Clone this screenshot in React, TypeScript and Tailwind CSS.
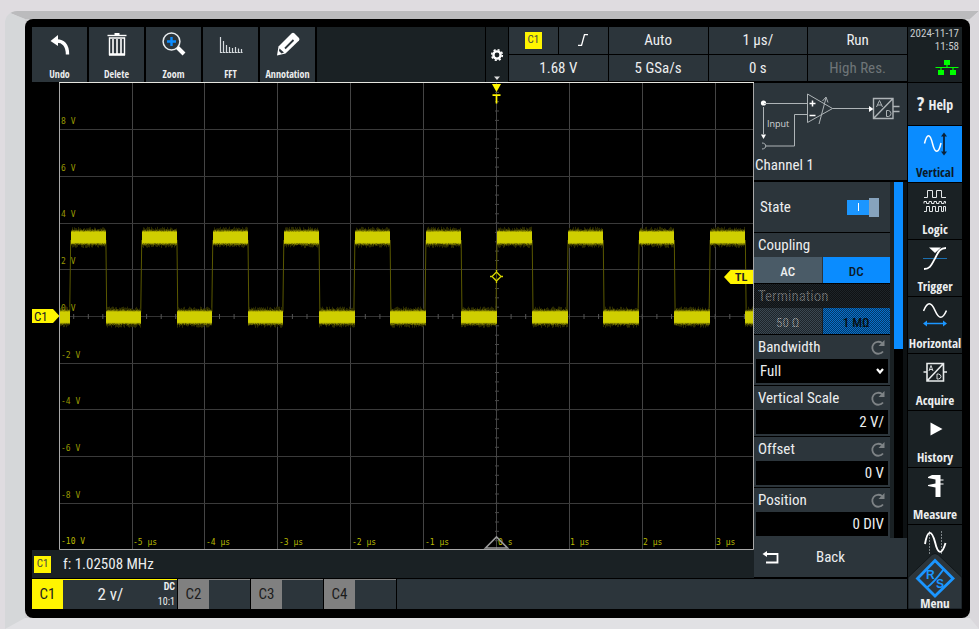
import {useId, useState} from "react";
import clsx from "clsx";

const PLOT = {left: 59, right: 753, top: 82, bottom: 549};
const CENTER = {x: 496, y: 316};
const DIV_X = 72.9;
const DIV_Y = 46.7;
const PERIOD = 71.05;

const VERTICALS = Array.from({length: 9}, (_, i) => CENTER.x + (i - 5) * DIV_X);
const HORIZONTALS = Array.from({length: 9}, (_, i) => CENTER.y + (i - 4) * DIV_Y);

// small repeatable generator, keeps the trace stable between renders
const createRandom = (seed: number) => () => {
	seed = (seed * 16807) % 2147483647;
	return seed / 2147483647;
};

const buildNoise = (
	from: number,
	to: number,
	y: number,
	half: number,
	spread: number,
	seed: number,
) => {
	const random = createRandom(seed);
	let d = "";

	for (let x = from; x < to; x += 1) {
		const up = half + random() * spread;
		const down = half + random() * spread;
		d += `M${x + 0.5} ${(y - up).toFixed(1)}V${(y + down).toFixed(1)}`;
	}

	return d;
};

const SEGMENTS = Array.from({length: 11}, (_, i) => {
	const rise = 497 + (i - 6) * PERIOD;
	const fall = rise + 35.3;

	return [
		{from: rise, to: fall, y: 237.4},
		{from: fall, to: rise + PERIOD - 0.4, y: 317.2},
	];
})
	.flat()
	.concat([{from: 59, to: 70.3, y: 317.2}])
	.map((s) => ({...s, from: Math.round(s.from), to: Math.min(Math.round(s.to), PLOT.right)}))
	.filter((s) => s.from < s.to);

const Waveform: React.FC = () => (
	<g fill="none">
		{Array.from({length: 10}, (_, i) => {
			const rise = 497 + (i - 6) * PERIOD;

			return (
				<path
					key={i}
					d={`M${rise - 1} 312L${rise} 240M${rise + 35.2} 240L${rise + 36} 312`}
					stroke="#5a5800"
				/>
			);
		})}

		{SEGMENTS.map((s, i) => (
			<g key={i}>
				<path d={buildNoise(s.from, s.to, s.y, 7.5, 3.2, i * 131 + 17)} stroke="#2c2b00" />
				<path d={buildNoise(s.from, s.to, s.y, 6.6, 1.4, i * 77 + 33)} stroke="#6b6a00" />
				<path d={buildNoise(s.from, s.to, s.y, 5.8, 0.8, i * 57 + 91)} stroke="#aead00" />
				<rect x={s.from} y={s.y - 5.5} width={s.to - s.from} height="11" fill="#cfce00" />
			</g>
		))}
	</g>
);

const Plot: React.FC = () => (
	<svg
		viewBox="32 82 722 468"
		className="block w-full h-full bg-black"
		role="img"
		aria-label="Channel 1"
	>
		<g stroke="#444" fill="none">
			{VERTICALS.map((x) => (
				<path key={x} d={`M${Math.round(x) + 0.5} 83V549`} />
			))}
			{HORIZONTALS.map((y) => (
				<path
					key={y}
					d={`M60 ${Math.round(y) + 0.5}H753`}
					stroke={y === CENTER.y ? "#333" : "#3a3a3a"}
				/>
			))}

			{Array.from({length: 47}, (_, i) => CENTER.x + 0.5 + (i - 29) * 14.58).map((x) => (
				<path key={x} d={`M${x.toFixed(1)} 314V319`} stroke="#555" />
			))}
			{Array.from({length: 49}, (_, i) => CENTER.y + 0.5 + (i - 24) * 9.34).map((y) => (
				<path key={y} d={`M495 ${y.toFixed(1)}H499`} stroke="#484848" />
			))}
		</g>

		<Waveform />

		<g fill="#989800" fontSize="8" fontWeight="400" fontFamily="'DejaVu Sans Mono', monospace">
			{["8 V", "6 V", "4 V", "2 V", "0 V", "-2 V", "-4 V", "-6 V", "-8 V"].map(
				(label, i) => (
					<text key={label} x="61" y={124 + Math.round(i * DIV_Y)}>
						{label}
					</text>
				),
			)}
			<text x="61" y="544" fill="#b8b800">
				-10 V
			</text>
			<g fill="#b8b800">
				{["-5 µs", "-4 µs", "-3 µs", "-2 µs", "-1 µs", "0 s", "1 µs", "2 µs", "3 µs"].map(
					(label, i) => (
						<text key={label} x={133 + Math.round(i * DIV_X)} y="545">
							{label}
						</text>
					),
				)}
			</g>
		</g>

		<path
			d={`M${PLOT.left + 0.5} ${PLOT.top + 0.5}H${PLOT.right + 0.5}V${PLOT.bottom + 0.5}H${PLOT.left + 0.5}Z`}
			fill="none"
			stroke="#a8a8a8"
		/>
		<path d="M59 82.5H754" stroke="#e6e6e0" />

		<path d="M485.5 548L496.5 537L507.5 548Z" fill="none" stroke="#999" strokeWidth="1.6" />
		<path d="M492 84H501L496.5 92Z" fill="#fff500" />
		<path d="M492.5 95.2H500.5M496.5 95V103.5" stroke="#fff500" strokeWidth="1.7" />
		<path
			d="M496.5 272L501 276.5L496.5 281L492 276.5ZM496.5 272V270M496.5 281V283M501 276.5H503M492 276.5H490"
			fill="none"
			stroke="#d5d400"
			strokeWidth="1.3"
		/>

		<path d="M31 309H53L59.5 316L53 323H31Z" fill="#fff500" />
		<text x="34" y="321" fontSize="13" fill="#222">
			C1
		</text>
		<path d="M753 270H730.5L724 277L730.5 284H753Z" fill="#fff500" />
		<text x="735" y="281" fontSize="11" fontFamily="'Open Sans', sans-serif" fontWeight="700" fill="#222">
			TL
		</text>
	</svg>
);

const UndoIcon = () => (
	<svg viewBox="0 0 24 24" className="size-6" fill="none">
		<path d="M2.5 9L10 3v11Z" fill="#fff" />
		<path d="M8 9C15 8.5 19.5 13 19.5 22.500" stroke="#fff" strokeWidth="3.4" />
	</svg>
);

const TrashIcon = () => (
	<svg viewBox="0 0 24 24" className="size-6" fill="none" stroke="#fff">
		<path d="M2.5 3.5H21.500" strokeWidth="1.4" />
		<path d="M9.5 2H14.500" strokeWidth="2" />
		<path d="M4.5 6V22.500H19.500V6Z" strokeWidth="1.4" />
		<path d="M4 22.500H20" strokeWidth="2.400" />
		<path d="M8 7V22M12 7V22M16 7V22" strokeWidth="1.6" />
	</svg>
);

const ZoomIcon = () => (
	<svg viewBox="0 0 24 24" className="size-6" fill="none">
		<circle cx="9.5" cy="9.5" r="8.400" stroke="#e8ecee" strokeWidth="1.5" />
		<path d="M9.5 5V14M5 9.5H14" stroke="#0a8cff" strokeWidth="2.4" />
		<path d="M15.500 15.500L22 22" stroke="#fff" strokeWidth="4" />
	</svg>
);

const FftIcon = () => (
	<svg viewBox="0 0 24 24" className="size-6" fill="none" stroke="#d5dadd">
		<path d="M1.5 20.500H23.500" strokeDasharray="2 1" />
		<path
			d="M1.5 5V21M4.500 9V21M7.500 13V21M10.500 15V21M13.500 16V21M16.500 15V21M19.500 16.500V21M22.500 17V21"
			strokeWidth="1.2"
		/>
	</svg>
);

const PencilIcon = () => (
	<svg viewBox="0 0 24 24" className="size-6" fill="none">
		<path d="M1 23.500L2.500 14.500L15.500 1.500Q17 0 18.500 1.500L23 6Q24 7 23 8.500L9.500 21.500Z" fill="#fff" />
		<path d="M9 16.500L17.500 8" stroke="#2c353b" strokeWidth="1.8" />
		<path d="M3.500 16.500L8 20.500L5.500 21.500L3 19Z" fill="#2c353b" />
	</svg>
);

const GearIcon = () => (
	<svg viewBox="0 0 14 14" className="size-[14px]" fill="none" stroke="#fff">
		<circle cx="7" cy="7" r="3.6" strokeWidth="2.4" />
		<circle cx="7" cy="7" r="5.3" strokeWidth="1.6" strokeDasharray="2.1 2.06" />
	</svg>
);

const NetworkIcon = () => (
	<svg viewBox="0 0 24 16" className="block w-6 h-4" fill="#00ff00">
		<path d="M9 0H15V5H9ZM3 10H9V15H3ZM15 10H21V15H15Z" />
		<path d="M0.500 7.500H23.500M12 5V8M6 7.500V11M18 7.500V11" stroke="#00ff00" strokeWidth="1.2" />
	</svg>
);

const VerticalIcon = () => (
	<svg viewBox="0 0 24 24" className="size-6" fill="none">
		<path d="M1.500 11.500C4 1 7 1 9.500 11.500C12 22 15.500 22 18 11" stroke="#fff" strokeWidth="1.5" />
		<path d="M21 3V21" stroke="#0b2238" strokeWidth="1.8" />
		<path d="M18 4.500L21 0.500L24 4.500ZM18 19.500L21 23.500L24 19.500Z" fill="#0b2238" />
	</svg>
);

const LogicIcon = () => (
	<svg viewBox="0 0 24 24" className="size-6" fill="none" stroke="#e3e6e8">
		<path d="M1 8.500H4.500V1.500H9.500V8.500H13.500V1.500H18.500V8.500H23" />
		<path d="M1 14.500V12.500H3.500V14.500H6V12.500H8.500V14.500H11V12.500H13.500V14.500H16V12.500H18.500V14.500H21V12.500H22.500V14.500" />
		<path d="M1 22.500H3.500V17.500H6.500V22.500H9.500V17.500H12.500V22.500H15.500V17.500H18.500V22.500H20.500V17.500H22.500V22.500" />
	</svg>
);

const TriggerIcon = () => (
	<svg viewBox="0 0 24 24" className="size-6" fill="none">
		<path d="M0 12.500H24" stroke="#1b6fb0" />
		<path d="M1 23C8 23 9 17 12 12.500C15 7 16 2 23 2" stroke="#fff" strokeWidth="1.8" />
		<path d="M6 1.500H18L12 7Z" fill="#fff" />
	</svg>
);

const HorizontalIcon = () => (
	<svg viewBox="0 0 24 24" className="size-6" fill="none">
		<path d="M0.500 8C4.500 -1.500 8 -1.500 12 7.500C16 16.500 19.500 16.500 23.500 7.500" stroke="#fff" strokeWidth="1.6" />
		<path d="M2 20.500H22" stroke="#1b96ff" strokeWidth="1.5" />
		<path d="M4 17.500L0 20.500L4 23.500ZM20 17.500L24 20.500L20 23.500Z" fill="#1b96ff" />
	</svg>
);

const AcquireIcon = () => (
	<svg viewBox="0 0 24 24" className="size-6" fill="none" stroke="#e8ebec" strokeWidth="1.6">
		<path d="M4 3.500H20.500V21H4ZM20 4L4.500 20.500M0.500 12H4M20.500 12H24" />
		<path d="M6 11L8 5.500L10 11M6.500 9.500H9.500M14 14V19H15.500Q18 18.500 18 16.500Q18 14.500 15.500 14Z" strokeWidth="0.9" />
	</svg>
);

const HistoryIcon = () => (
	<svg viewBox="0 0 24 24" className="size-6" fill="#fff">
		<path d="M7.500 5.500L19.500 12L7.500 18.500Z" />
	</svg>
);

const MeasureIcon = () => (
	<svg viewBox="0 0 24 24" className="size-6" fill="#fff">
		<path d="M9 1H17.500V23H12.500V13.500L5 12V11L12.500 9.500V5.500L5 4V3Z" />
		<path d="M17 5.500H20.500V6.500H17ZM17 9.500H20.500V10.500H17Z" />
	</svg>
);

const CursorIcon = () => (
	<svg viewBox="0 0 24 24" className="size-6" fill="none">
		<path d="M6.500 0V24M18.500 0V24" stroke="#7d8487" strokeDasharray="2 1" />
		<path d="M2 13C4.500 -1.500 8.500 -1.500 12 11C15 24 19 24 22.500 12" stroke="#fff" strokeWidth="1.9" />
	</svg>
);

const ResetIcon = () => (
	<svg viewBox="0 0 16 16" className="size-4" fill="none">
		<path d="M12 4A6 6 0 1 0 13 12.500" stroke="#7e8386" strokeWidth="1.8" />
		<path d="M14.500 1V7H8.500Z" fill="#7e8386" />
	</svg>
);

const InputDiagram: React.FC = () => (
	<svg viewBox="0 0 153 72" className="block w-full" fill="none" stroke="#aeb4b7">
		<circle cx="9.5" cy="20" r="2.6" fill="#fff" stroke="none" />
		<path d="M10 20.500H53.500M9.500 24V51" />
		<path d="M7 51.500H12L9.500 56Z" fill="#fff" stroke="none" />
		<path d="M8 60C13 60 13 66 8 66M12 63H40.500V31.500H53.500" />
		<path d="M53.500 11V39.500L78.500 25.500ZM78.500 25.500H116" />
		<path d="M65 41L72 15M68.500 18L72 14L74 19.500" />
		<path d="M55.500 20.500H61.500M58.500 17.500V23.500M55.500 32.500H61.500" stroke="#fff" strokeWidth="1.5" />
		<path d="M115 23L119.500 26L115 29Z" fill="#fff" stroke="none" />
		<path d="M119.500 15.500H139V35.500H119.500ZM138.500 16L120 35M139 23.500H145.500M139 28.500H145.500" strokeWidth="1.4" />
		<path d="M122.500 24L125.500 17.500L128.500 24M123.500 22H127.500M132.500 27.500V33.500H134.500Q137 33 137 30.500Q137 28 134.500 27.500Z" />
		<text
			x="13"
			y="44"
			fontSize="9"
			fontFamily="'Open Sans', sans-serif"
			fill="#d3d6d8"
			stroke="none"
		>
			Input
		</text>
	</svg>
);

const TOOLS = [
	{label: "Undo", icon: <UndoIcon />},
	{label: "Delete", icon: <TrashIcon />},
	{label: "Zoom", icon: <ZoomIcon />},
	{label: "FFT", icon: <FftIcon />},
	{label: "Annotation", icon: <PencilIcon />},
];

const Toolbar: React.FC = () => (
	<header className="flex h-[55px] gap-px">
		<div className="flex gap-px font-['Open_Sans_Condensed',sans-serif] font-bold">
			{TOOLS.map(({label, icon}) => (
				<button
					key={label}
					className="flex flex-col items-center justify-between w-14 pt-[5px] border-r border-black bg-[#2c353b] text-[10px] leading-4 text-[#eceeef]"
				>
					{icon}
					<span>{label}</span>
				</button>
			))}
		</div>

		<div className="flex-1 bg-[#1a2124]" />

		<button
			aria-label="Settings"
			className="flex flex-col items-center justify-end gap-3.5 w-[22px] pb-[2px] bg-[#1a2124]"
		>
			<GearIcon />
			<svg viewBox="0 0 6 4" className="w-[6px] h-1">
				<path d="M0 0.500H6L3 4Z" fill="#ddd" />
			</svg>
		</button>

		<div className="grid grid-cols-4 grid-rows-2 gap-px w-[398px] pb-px text-[15px] leading-5 text-[#eceeef] *:flex *:items-center *:justify-center *:bg-[#2c353b]">
			<div className="gap-px !bg-black">
				<span className="flex flex-1 h-full items-center justify-center bg-[#2c353b]">
					<span className="flex items-center justify-center size-[17px] bg-[#fff500] text-[11px] text-[#444]">
						C1
					</span>
				</span>
				<span className="flex flex-1 h-full items-center justify-center bg-[#2c353b]">
					<svg viewBox="0 0 12 12" className="size-3" fill="none" stroke="#fff">
						<path d="M1 11.500H4.500L7.500 0.500H11" strokeWidth="1.3" />
					</svg>
				</span>
			</div>
			<div>Auto</div>
			<div>1 µs/</div>
			<div>Run</div>
			<div>1.68 V</div>
			<div>5 GSa/s</div>
			<div>0 s</div>
			<div className="text-[#6f7578]">High Res.</div>
		</div>
	</header>
);

const CARD = "h-[50px] bg-[#2c353b] border-0";

const Choice: React.FC<{
	legend: string;
	options: string[];
	initial: string;
	disabled?: boolean;
}> = ({legend, options, initial, disabled}) => {
	const [value, setValue] = useState(initial);
	const name = useId();

	return (
		<fieldset disabled={disabled} className={clsx(CARD, "relative min-w-0")}>
			<legend
				className={clsx(
					"float-left w-full h-6 px-1 leading-6",
					disabled ? "bg-[#262e33] text-[#9a9fa2]" : "text-[#eceeef]",
				)}
			>
				{legend}
			</legend>

			<div className="flex w-full gap-px">
				{options.map((option) => (
					<label
						key={option}
						className={clsx(
							"flex flex-1 items-center justify-center h-[26px] pt-1 text-[13px]",
							option === value
								? "bg-[#0a8cff] font-medium text-[#0d1a26]"
								: disabled
									? "bg-[#4a5b67] text-[#c9cfd3]"
									: "bg-[#4a5b67] font-medium text-[#eceeef]",
						)}
					>
						<input
							type="radio"
							name={name}
							checked={option === value}
							onChange={() => setValue(option)}
							className="sr-only"
						/>
						{option}
					</label>
				))}
			</div>

			{disabled && (
				<span className="absolute inset-0 bg-black/20 bg-[repeating-conic-gradient(rgba(0,0,0,0.5)_0_25%,transparent_0_50%)] bg-[length:2px_2px]" />
			)}
		</fieldset>
	);
};

const CardTitle: React.FC<{id: string; label: string}> = ({id, label}) => (
	<div className="flex items-center justify-between h-6 px-1 leading-5 text-[#eceeef]">
		<label htmlFor={id}>{label}</label>
		<button aria-label={`Reset ${label}`}>
			<ResetIcon />
		</button>
	</div>
);

const NumberField: React.FC<{label: string; value: string}> = ({label, value}) => {
	const id = useId();

	return (
		<div className={CARD}>
			<CardTitle id={id} label={label} />
			<div className="px-0.5">
				<input
					id={id}
					defaultValue={value}
					className="block w-full h-6 px-1 bg-black text-right text-[#eceeef] outline-none"
				/>
			</div>
		</div>
	);
};

const SidePanel: React.FC = () => {
	const [enabled, setEnabled] = useState(true);
	const bandwidthId = useId();

	return (
		<aside className="flex flex-col w-[153px] pt-px text-[15px]">
			<div className="h-[97px] bg-[#2c353b] text-[#eceeef]">
				<InputDiagram />
				<h2 className="px-px leading-5">Channel 1</h2>
			</div>

			<div className="flex flex-1 pt-0.5">
				<div className="flex flex-col flex-1 gap-px">
					<label className={clsx(CARD, "flex items-center justify-between pl-1.5 pr-[11px] text-[#eceeef]")}>
						State
						<input
							type="checkbox"
							checked={enabled}
							onChange={() => setEnabled(!enabled)}
							className="sr-only"
						/>
						<span className={clsx("flex items-center", !enabled && "flex-row-reverse")}>
							<span className="flex items-center justify-center w-[22px] h-[15px] bg-[#1b96ff]">
								<span className="w-px h-2 bg-white" />
							</span>
							<span className="w-[10px] h-[19px] bg-[#86a3bd]" />
						</span>
					</label>

					<Choice legend="Coupling" options={["AC", "DC"]} initial="DC" />
					<Choice legend="Termination" options={["50 Ω", "1 MΩ"]} initial="1 MΩ" disabled />

					<div className={CARD}>
						<CardTitle id={bandwidthId} label="Bandwidth" />
						<div className="relative px-0.5">
							<select
								id={bandwidthId}
								className="block w-full h-6 px-1 appearance-none bg-black text-[#eceeef] outline-none"
							>
								<option>Full</option>
							</select>
							<svg viewBox="0 0 8 6" className="absolute right-1.5 top-[9px] w-2 h-[6px]" fill="none">
								<path d="M1 1L4 4.500L7 1" stroke="#fff" strokeWidth="2.2" />
							</svg>
						</div>
					</div>

					<NumberField label="Vertical Scale" value="2 V/" />
					<NumberField label="Offset" value="0 V" />
					<NumberField label="Position" value="0 DIV" />
				</div>

				<div className="w-1 bg-[#1a2124]" />
				<div className="w-[9px] bg-black">
					<div className="h-[47%] bg-[#0a8cff]" />
				</div>
				<div className="w-1 bg-[#0d1113]" />
			</div>

			<button className="relative flex items-center justify-center h-10 bg-[#2c353b] border-b border-black text-[#eceeef]">
				<svg viewBox="0 0 18 14" className="absolute left-2 w-[18px] h-[14px]" fill="none">
					<path d="M3 3H15.500V11.500H4" stroke="#fff" strokeWidth="1.8" />
					<path d="M0.500 3L5 0V6Z" fill="#fff" />
				</svg>
				Back
			</button>
		</aside>
	);
};

const NAV = [
	{label: "Vertical", icon: <VerticalIcon />},
	{label: "Logic", icon: <LogicIcon />},
	{label: "Trigger", icon: <TriggerIcon />},
	{label: "Horizontal", icon: <HorizontalIcon />},
	{label: "Acquire", icon: <AcquireIcon />},
	{label: "History", icon: <HistoryIcon />},
	{label: "Measure", icon: <MeasureIcon />},
];

const MainNav: React.FC = () => (
	<nav className="relative flex flex-col w-[54px] gap-px font-['Open_Sans_Condensed',sans-serif] font-bold text-[13px] text-[#eceeef]">
		<div className="flex flex-col items-end h-[55px] pr-[3px] bg-[#1a2124] font-['Roboto_Condensed',sans-serif] font-normal text-[11px] leading-[13px] text-[#c9cdcf]">
			<span>2024-11-17</span>
			<span>11:58</span>
			<span className="pt-[7px]">
				<NetworkIcon />
			</span>
		</div>

		<button className="flex items-center justify-center gap-1 h-[42px] bg-[#1f272d] text-[14px]">
			<span className="text-[20px]">?</span>
			Help
		</button>

		{NAV.map(({label, icon}, idx) => (
			<button
				key={label}
				className={clsx(
					"flex flex-col items-center justify-between h-14 pt-[6px] leading-5",
					idx === 0 ? "bg-[#0a8cff] text-[#0b1a28]" : "bg-[#1a2124]",
				)}
			>
				{icon}
				<span>{label}</span>
			</button>
		))}

		<button aria-label="Cursor" className="flex flex-1 justify-center pt-[6px] bg-[#1a2124]">
			<CursorIcon />
		</button>

		<button className="absolute inset-x-0 bottom-0 h-14">
			<svg viewBox="0 0 54 56" className="block w-full h-full" fill="none">
				<path d="M0 24.500L24 1.500Q27 -0.500 30 1.500L54 24.500V56H0Z" fill="#2c353b" stroke="#11171a" />
				<path d="M27 7.500L45 25.500L27 43L9.500 25.500Z" stroke="#1b96ff" strokeWidth="2.8" />
				<path d="M19 34.500C25 30 30 24 35.500 16.500" stroke="#1b96ff" strokeWidth="2" />
				<g fontSize="12" fontFamily="'Liberation Sans', sans-serif" fill="#1b96ff">
					<text x="18" y="26">
						R
					</text>
					<text x="28" y="35">
						S
					</text>
				</g>
			</svg>
			<span className="absolute inset-x-0 bottom-0 leading-3">Menu</span>
		</button>
	</nav>
);

const ChannelBar: React.FC = () => (
	<footer className="flex h-[30px] gap-px text-[15px]">
		<button className="flex w-[145px] border-t border-[#fff500] bg-[#2c353b] text-[#eceeef]">
			<span className="flex items-center justify-center w-[31px] h-full bg-[#fff500] text-[#222]">
				C1
			</span>
			<span className="flex flex-1 items-center justify-center h-full text-[17px]">2 v/</span>
			<span className="flex flex-col items-end justify-between h-full pr-0.5 text-[10px] leading-[14px]">
				<b>DC</b>
				<span>10:1</span>
			</span>
		</button>

		{["C2", "C3", "C4"].map((channel) => (
			<button
				key={channel}
				className="flex w-[72px] border-t border-[#808080] bg-[#2c353b] text-[#1c1c1c]"
			>
				<span className="flex items-center justify-center w-[31px] h-full bg-[#808080]">
					{channel}
				</span>
			</button>
		))}

		<div className="flex-1 bg-[#2c353b]" />
	</footer>
);

export default function App() {
	return (
		<div className="flex min-h-screen pt-[11px] pl-[5px] bg-[#dfdce0] font-['Roboto_Condensed','Open_Sans_Condensed','Lato',sans-serif]">
			<div className="flex flex-1 border-t-8 border-l-20 border-r-9 border-b-11 border-t-[#bbbbbd] border-l-[#d5d7d9] border-r-[#dad8dc] border-b-[#e1e1e4] rounded-tl-xl bg-[#d0d0d2]">
				<div className="flex flex-1 gap-px pt-2 pb-[9px] pl-[7px] pr-2 rounded-lg bg-black">
					<div className="flex flex-col flex-1 min-w-0">
						<Toolbar />

						<main className="flex flex-1">
							<div className="flex flex-col flex-1 min-w-0">
								<div className="flex-1">
									<Plot />
								</div>
								<div className="flex items-center gap-3 h-7 px-0.5 bg-[#1a2124] text-[15px] text-[#eceeef]">
									<span className="flex items-center justify-center size-[17px] bg-[#fff500] text-[11px] text-[#444]">
										C1
									</span>
									f: 1.02508 MHz
								</div>
							</div>

							<SidePanel />
						</main>

						<div className="pt-px">
							<ChannelBar />
						</div>
					</div>

					<MainNav />
				</div>
			</div>
		</div>
	);
}
